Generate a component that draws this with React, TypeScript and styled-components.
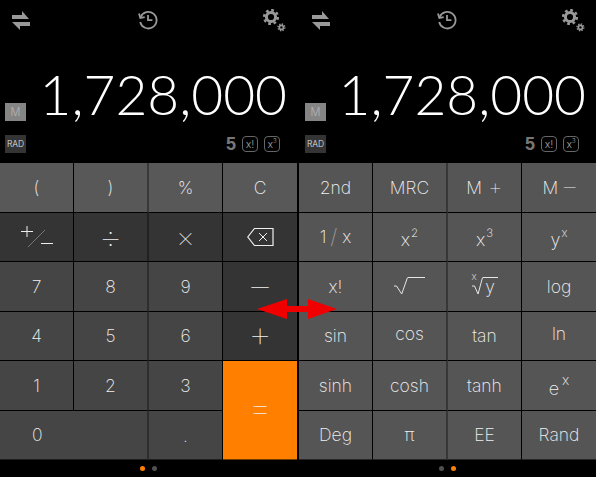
import React from 'react';
import styled, { createGlobalStyle } from 'styled-components';

const GlobalStyle = createGlobalStyle`
  html, body {
    margin: 0;
    background: #000;
  }
  body {
    font-family: Inter, "Liberation Sans", sans-serif;
    font-weight: 200;
    -webkit-font-smoothing: antialiased;
  }
`;

const Stage = styled.main`
  position: relative;
  display: flex;
  gap: 2px;
  width: 596px;
  height: 477px;
  overflow: hidden;
  background: #000;
`;

const Screen = styled.section`
  display: flex;
  flex-direction: column;
  width: 297px;
  flex: none;
`;

const Head = styled.header<{ $offset: number }>`
  display: flex;
  flex-direction: column;
  height: 163px;
  padding-left: ${(p) => p.$offset}px;
`;

const Toolbar = styled.div`
  display: flex;
  align-items: center;
  justify-content: space-between;
  height: 40px;
  padding: 0 11px 0 12px;

  svg:nth-child(2) {
    margin-left: 2px;
  }
  svg:nth-child(3) {
    margin-top: 2px;
  }
`;

const Readout = styled.div`
  display: flex;
  align-items: flex-end;
  justify-content: space-between;
  flex: 1;
  padding: 0 10px 10px 5px;
`;

const Badges = styled.div`
  display: flex;
  flex-direction: column;
  gap: 14px;
`;

const Badge = styled.div<{ $on?: boolean }>`
  display: grid;
  place-items: center;
  width: 21px;
  height: 18px;
  font-size: ${(p) => (p.$on ? 11 : 8.5)}px;
  font-weight: 300;
  color: ${(p) => (p.$on ? '#b5b5b5' : '#e0e0e0')};
  background: ${(p) => (p.$on ? '#858585' : '#343434')};
`;

const Figures = styled.div`
  display: flex;
  flex-direction: column;
  align-items: flex-end;
`;

const Value = styled.div`
  font-family: Lato, sans-serif;
  font-size: 55px;
  font-weight: 300;
  line-height: 56px;
  color: #fff;
  white-space: nowrap;
  margin-bottom: 13px;
`;

const Flags = styled.div`
  display: flex;
  align-items: center;
  gap: 6px;
  height: 18px;
  padding-right: 7px;
`;

const Precision = styled.span`
  font-family: "Liberation Sans", sans-serif;
  font-size: 18px;
  font-weight: 700;
  color: #777;
`;

const Flag = styled.span`
  display: flex;
  align-items: center;
  justify-content: center;
  box-sizing: border-box;
  width: 16px;
  height: 16px;
  font-size: 10.5px;
  font-weight: 300;
  color: #a0a0a0;
  border: 1px solid #666;
  border-radius: 4px;
`;

const FlagSup = styled.span`
  font-size: 6px;
  line-height: 1;
  align-self: flex-start;
  margin-top: 1px;
`;

const Pad = styled.div`
  display: grid;
  grid-template-columns: 74px 75px 74px 74px;
  grid-template-rows: repeat(6, 1fr);
  height: 297px;
`;

const TONES = {
  top: '#585858',
  op: '#343434',
  num: '#454545',
  sci: '#555555',
  eq: '#ff8000',
};

const Key = styled.button<{
  $tone: keyof typeof TONES;
  $span?: number;
  $tall?: boolean;
  $seam?: boolean;
  $edge?: boolean;
  $last?: boolean;
}>`
  display: flex;
  align-items: center;
  justify-content: center;
  grid-column: span ${(p) => p.$span ?? 1};
  grid-row: span ${(p) => (p.$tall ? 2 : 1)};
  padding: 0;
  font: inherit;
  font-size: 17.500px;
  color: #f0f0f0;
  background: ${(p) => TONES[p.$tone]};
  border: 0;
  border-right: ${(p) =>
    p.$edge ? '0' : p.$seam ? '2px solid rgba(0, 0, 0, 0.35)' : '1px solid #000'};
  border-bottom: 1px solid ${(p) => (p.$last ? 'rgba(0, 0, 0, 0.55)' : '#000')};
`;

const Symbol = styled.span<{ $size: number; $lift?: number }>`
  font-size: ${(p) => p.$size}px;
  font-weight: 100;
  line-height: 1;
  transform: translateY(${(p) => -(p.$lift ?? 0)}px);
`;

const Memory = styled.span`
  display: inline-flex;
  align-items: center;
  gap: 6px;
  line-height: 1;
`;

const MemorySign = styled.span`
  font-size: 23px;
  font-weight: 100;
  line-height: 18px;
`;

const ZeroLabel = styled.span`
  width: 100%;
  padding-left: 32px;
  text-align: left;
`;

const Dot = styled.span`
  transform: translateY(1px);
`;

const Power = styled.span`
  display: inline-flex;
  align-items: flex-start;
  font-size: 18px;
  transform: translateY(3px);
`;

const Sup = styled.span<{ $big?: boolean }>`
  font-size: ${(p) => (p.$big ? 14 : 11.500)}px;
  line-height: 1;
  margin-left: ${(p) => (p.$big ? 3 : 1)}px;
  transform: translateY(${(p) => (p.$big ? -5 : -1)}px);
`;

const Faint = styled.span`
  color: #999;
  font-size: 21px;
  margin: 0 5px 0 4px;
`;

const Fraction = styled.span`
  display: inline-flex;
  align-items: center;
  line-height: 1;
`;

const Raised = styled.span`
  transform: translateY(-2px);
`;

const Radicand = styled.span<{ $width: number }>`
  display: inline-block;
  min-width: ${(p) => p.$width}px;
  line-height: 17px;
  height: 17px;
  border-top: 1px solid #e6e6e6;
  text-align: center;
`;

const RootIndex = styled.span`
  font-size: 10px;
  margin-right: -5px;
  transform: translateY(-7px);
`;

const Inline = styled.span`
  display: inline-flex;
  align-items: flex-start;
`;

const Pager = styled.nav`
  display: flex;
  justify-content: center;
  align-items: center;
  gap: 7px;
  flex: 1;
  padding-bottom: 1px;
`;

const PageDot = styled.span<{ $on?: boolean }>`
  width: 5px;
  height: 5px;
  border-radius: 50%;
  background: ${(p) => (p.$on ? '#ff8000' : '#505050')};
`;

const SwipeArrow = styled.svg`
  position: absolute;
  left: 257px;
  top: 298px;
`;

const SwapIcon = () => (
  <svg width="18" height="19" viewBox="0 0 18 19" fill="#999">
    <path d="M0 4h10V0l7 8H0z" />
    <path d="M0 11h18v4H8v4z" />
  </svg>
);

const HistoryIcon = () => (
  <svg width="20" height="20" viewBox="0 0 20 20" fill="none" stroke="#999" strokeWidth="1.8">
    <path d="M2.600 7a8.300 8.300 0 1 1-.4 5" />
    <path d="M1 3.600 2.300 8l4.400-.9" />
    <path d="M10 5v5.200h4.400" />
  </svg>
);

const GearIcon = () => (
  <svg width="23" height="24" viewBox="0 0 23 24" fill="none" stroke="#999">
    <circle cx="8" cy="8" r="4.600" strokeWidth="3" />
    <circle cx="8" cy="8" r="6.800" strokeWidth="2.600" strokeDasharray="2.700 2.640" />
    <circle cx="18.400" cy="18.400" r="2" strokeWidth="1.600" />
    <circle cx="18.400" cy="18.400" r="3.400" strokeWidth="1.400" strokeDasharray="1.400 1.270" />
  </svg>
);

const PlusMinus = () => (
  <svg width="34" height="22" viewBox="0 0 34 22" fill="none" aria-label="plus or minus">
    <path d="M7 0v11M1 5.500h12" stroke="#eee" />
    <path d="M8 21 25 4" stroke="#777" />
    <path d="M21 17.500h12" stroke="#eee" />
  </svg>
);

const Backspace = () => (
  <svg width="27" height="18" viewBox="0 0 27 18" fill="none" stroke="#eee" aria-label="delete">
    <path d="M7.500.5h18.500v17H7.500L.8 9z" strokeWidth="1.200" />
    <path d="M12 5l8 8M20 5l-8 8" />
  </svg>
);

const Radical = ({ width, height }: { width: number; height: number }) => (
  <svg width={width} height={height} viewBox={`0 0 ${width} ${height}`} fill="none" stroke="#e6e6e6">
    <path d={`M0 ${height * 0.5}h2.500L${width * 0.55} ${height - 1}L${width - 0.5} .5`} />
  </svg>
);

type KeySpec = {
  label: React.ReactNode;
  tone: keyof typeof TONES;
  span?: number;
  tall?: boolean;
  seam?: boolean;
  edge?: boolean;
  last?: boolean;
};

const BASIC_KEYS: KeySpec[] = [
  { label: '(', tone: 'top' },
  { label: ')', tone: 'top', seam: true },
  { label: '%', tone: 'top' },
  { label: 'C', tone: 'top', edge: true },
  { label: <PlusMinus />, tone: 'op' },
  { label: <Symbol $size={38} $lift={1}>÷</Symbol>, tone: 'op', seam: true },
  { label: <Symbol $size={29}>×</Symbol>, tone: 'op' },
  { label: <Backspace />, tone: 'op', edge: true },
  { label: '7', tone: 'num' },
  { label: '8', tone: 'num', seam: true },
  { label: '9', tone: 'num' },
  { label: '—', tone: 'op', edge: true },
  { label: '4', tone: 'num' },
  { label: '5', tone: 'num', seam: true },
  { label: '6', tone: 'num' },
  { label: <Symbol $size={38} $lift={3}>+</Symbol>, tone: 'op', edge: true },
  { label: '1', tone: 'num' },
  { label: '2', tone: 'num', seam: true },
  { label: '3', tone: 'num' },
  { label: <Symbol $size={38} $lift={3}>=</Symbol>, tone: 'eq', tall: true, edge: true, last: true },
  { label: <ZeroLabel>0</ZeroLabel>, tone: 'num', span: 2, seam: true, last: true },
  { label: <Dot>.</Dot>, tone: 'num', last: true },
];

const SCIENCE_LABELS: React.ReactNode[] = [
  '2nd',
  'MRC',
  <Memory>
    M<MemorySign>+</MemorySign>
  </Memory>,
  <Memory>
    M<MemorySign>–</MemorySign>
  </Memory>,
  <Fraction>
    1<Faint>/</Faint>x
  </Fraction>,
  <Power>
    x<Sup>2</Sup>
  </Power>,
  <Power>
    x<Sup>3</Sup>
  </Power>,
  <Power>
    y<Sup>x</Sup>
  </Power>,
  'x!',
  <Inline>
    <Radical width={14} height={18} />
    <Radicand $width={17} />
  </Inline>,
  <Inline>
    <RootIndex>x</RootIndex>
    <Radical width={11} height={18} />
    <Radicand $width={15}>y</Radicand>
  </Inline>,
  'log',
  'sin',
  <Raised>cos</Raised>,
  'tan',
  <Raised>ln</Raised>,
  'sinh',
  'cosh',
  'tanh',
  <Power>
    e<Sup $big>x</Sup>
  </Power>,
  'Deg',
  'π',
  'EE',
  'Rand',
];

const SCIENCE_KEYS: KeySpec[] = SCIENCE_LABELS.map((label, i) => ({
  label,
  tone: 'sci',
  seam: i % 4 === 1,
  edge: i % 4 === 3,
  last: i >= 20,
}));

const Calculator = ({
  keys,
  page,
  offset,
}: {
  keys: KeySpec[];
  page: number;
  offset: number;
}) => (
  <Screen>
    <Head $offset={offset}>
      <Toolbar>
        <SwapIcon />
        <HistoryIcon />
        <GearIcon />
      </Toolbar>
      <Readout>
        <Badges>
          <Badge $on>M</Badge>
          <Badge>RAD</Badge>
        </Badges>
        <Figures>
          <Value>1,728,000</Value>
          <Flags>
            <Precision>5</Precision>
            <Flag>x!</Flag>
            <Flag>
              x<FlagSup>3</FlagSup>
            </Flag>
          </Flags>
        </Figures>
      </Readout>
    </Head>
    <Pad>
      {keys.map((k, i) => (
        <Key
          key={i}
          $tone={k.tone}
          $span={k.span}
          $tall={k.tall}
          $seam={k.seam}
          $edge={k.edge}
          $last={k.last}
        >
          {k.label}
        </Key>
      ))}
    </Pad>
    <Pager>
      <PageDot $on={page === 0} />
      <PageDot $on={page === 1} />
    </Pager>
  </Screen>
);

export default function App() {
  return (
    <>
      <GlobalStyle />
      <Stage>
        <Calculator keys={BASIC_KEYS} page={0} offset={0} />
        <Calculator keys={SCIENCE_KEYS} page={1} offset={1} />
        <SwipeArrow width="81" height="22" viewBox="0 0 81 22" fill="#f00000">
          <path d="M0 11 30 1v7h21V1l29 10-29 10v-7H30v7z" />
        </SwipeArrow>
      </Stage>
    </>
  );
}
